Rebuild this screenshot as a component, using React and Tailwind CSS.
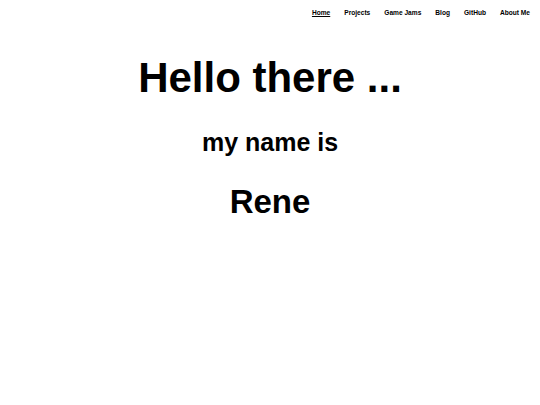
export default function App() {
  return (
    <div className="w-[540px] h-[405px] bg-white text-black" style={{ fontFamily: '"Liberation Sans", Arial, sans-serif' }}>
      <nav className="flex justify-end gap-[14px] pr-[10px] pt-[9px] text-[6.6px] leading-[8px] font-bold">
        <a className="underline">Home</a>
        <a>Projects</a>
        <a>Game Jams</a>
        <a>Blog</a>
        <a>GitHub</a>
        <a>About Me</a>
      </nav>
      <h1 className="mt-[40px] text-center text-[42px] leading-[42px] font-bold">Hello there ...</h1>
      <h2 className="mt-[31px] text-center text-[25px] leading-[25px] font-bold">my name is</h2>
      <h2 className="mt-[30px] text-center text-[33px] leading-[33px] font-bold">Rene</h2>
    </div>
  );
}
